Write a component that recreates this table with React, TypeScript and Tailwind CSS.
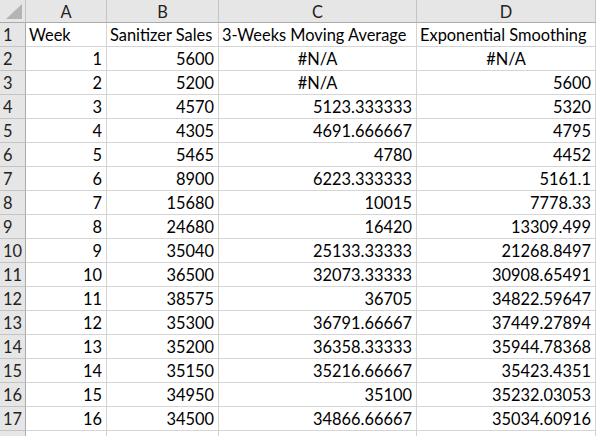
import React from "react";

const rows: [string, string, string, string][] = [
  ["Week", "Sanitizer Sales", "3-Weeks Moving Average", "Exponential Smoothing"],
  ["1", "5600", "#N/A", "#N/A"],
  ["2", "5200", "#N/A", "5600"],
  ["3", "4570", "5123.333333", "5320"],
  ["4", "4305", "4691.666667", "4795"],
  ["5", "5465", "4780", "4452"],
  ["6", "8900", "6223.333333", "5161.1"],
  ["7", "15680", "10015", "7778.33"],
  ["8", "24680", "16420", "13309.499"],
  ["9", "35040", "25133.33333", "21268.8497"],
  ["10", "36500", "32073.33333", "30908.65491"],
  ["11", "38575", "36705", "34822.59647"],
  ["12", "35300", "36791.66667", "37449.27894"],
  ["13", "35200", "36358.33333", "35944.78368"],
  ["14", "35150", "35216.66667", "35423.4351"],
  ["15", "34950", "35100", "35232.03053"],
  ["16", "34500", "34866.66667", "35034.60916"],
  ["", "", "", ""],
];

function align(v: string, rowIdx: number) {
  if (rowIdx === 0) return "justify-start pl-[3px]";
  if (v === "#N/A") return "justify-center";
  return "justify-end pr-[4px]";
}

export default function App() {
  return (
    <div
      className="w-[596px] h-[436px] overflow-hidden bg-white text-black"
      style={{ fontFamily: "Lato, 'Open Sans', sans-serif" }}
    >
      <div className="grid grid-cols-[26px_81px_112px_198px_179px] text-[16.4px]">
        {/* header row */}
        <div className="relative h-[23px] bg-[#e6e6e6] border-r border-b border-r-[#c4c4c4] border-b-[#ababab]">
          <div
            className="absolute right-[3px] bottom-[3px] w-[16px] h-[15px] bg-[#b4b4b4]"
            style={{ clipPath: "polygon(100% 0, 100% 100%, 0 100%)" }}
          />
        </div>
        {["A", "B", "C", "D"].map((c) => (
          <div
            key={c}
            className="h-[23px] bg-[#e6e6e6] border-r border-b border-r-[#c4c4c4] border-b-[#ababab] flex items-end justify-center leading-[21px] text-[#222]"
          >
            {c}
          </div>
        ))}
        {rows.map((r, i) => (
          <React.Fragment key={i}>
            <div className="h-[24px] bg-[#e6e6e6] border-r border-b border-r-[#ababab] border-b-[#c4c4c4] flex items-end pl-[3px] leading-[23px] text-[#222]">
              {i < 17 ? i + 1 : ""}
            </div>
            {r.map((v, j) => (
              <div
                key={j}
                className={`h-[24px] border-r border-b border-[#d4d4d4] flex items-end leading-[23px] whitespace-nowrap overflow-hidden ${align(v, i)}`}
              >
                {v}
              </div>
            ))}
          </React.Fragment>
        ))}
      </div>
    </div>
  );
}
